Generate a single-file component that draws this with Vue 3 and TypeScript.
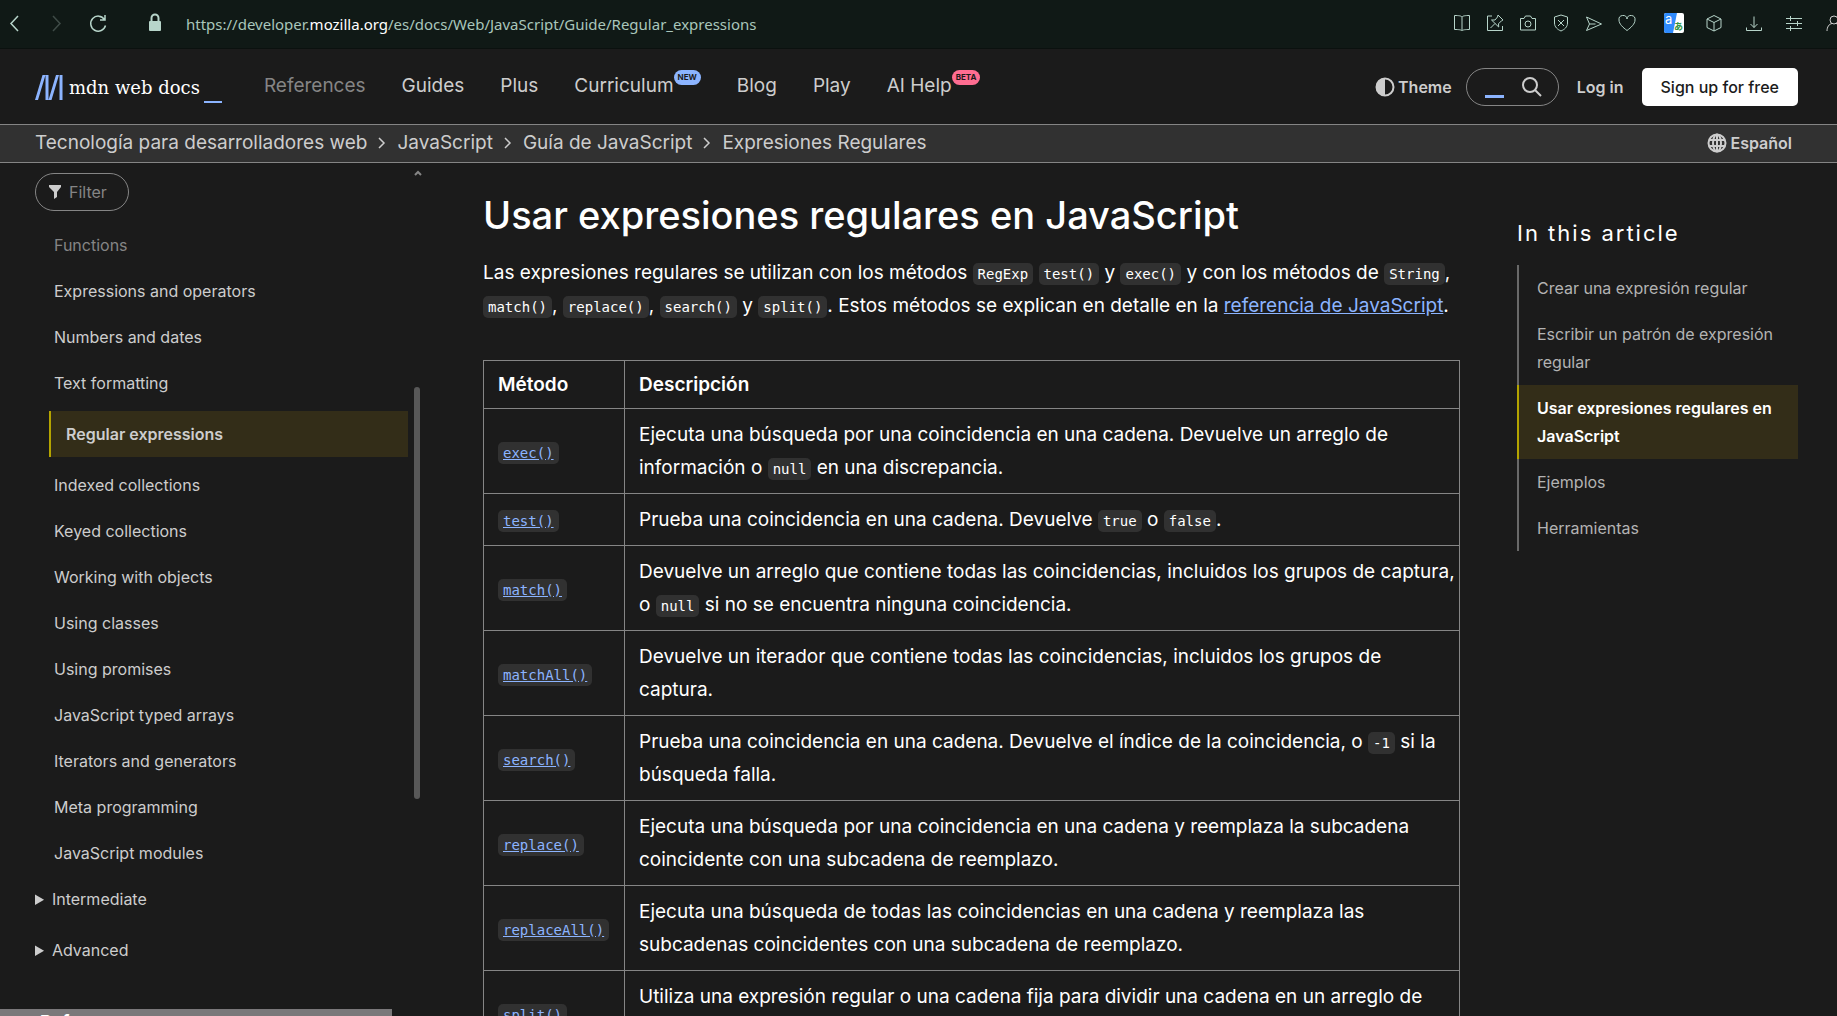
<script setup lang="ts">
interface NavItem { label: string; badge?: string; tone?: string; dim?: boolean }
interface Part { kind: 'text' | 'code' | 'link'; value: string }
interface Method { name: string; text: Part[] }

const t = (value: string): Part => ({ kind: 'text', value })
const c = (value: string): Part => ({ kind: 'code', value })
const l = (value: string): Part => ({ kind: 'link', value })

const nav: NavItem[] = [
  { label: 'References', dim: true },
  { label: 'Guides' },
  { label: 'Plus' },
  { label: 'Curriculum', badge: 'NEW', tone: 'new' },
  { label: 'Blog' },
  { label: 'Play' },
  { label: 'AI Help', badge: 'BETA', tone: 'beta' },
]

const crumbs = ['Tecnología para desarrolladores web', 'JavaScript', 'Guía de JavaScript', 'Expresiones Regulares']

const sidebar = [
  'Functions', 'Expressions and operators', 'Numbers and dates', 'Text formatting', 'Regular expressions',
  'Indexed collections', 'Keyed collections', 'Working with objects', 'Using classes', 'Using promises',
  'JavaScript typed arrays', 'Iterators and generators', 'Meta programming', 'JavaScript modules',
]

const intro: Part[] = [
  t('Las expresiones regulares se utilizan con los métodos '), c('RegExp'), t(' '), c('test()'), t(' y '), c('exec()'),
  t(' y con los métodos de '), c('String'), t(', '), c('match()'), t(', '), c('replace()'), t(', '), c('search()'),
  t(' y '), c('split()'), t('. Estos métodos se explican en detalle en la '), l('referencia de JavaScript'), t('.'),
]

const methods: Method[] = [
  { name: 'exec()', text: [t('Ejecuta una búsqueda por una coincidencia en una cadena. Devuelve un arreglo de información o '), c('null'), t(' en una discrepancia.')] },
  { name: 'test()', text: [t('Prueba una coincidencia en una cadena. Devuelve '), c('true'), t(' o '), c('false'), t('.')] },
  { name: 'match()', text: [t('Devuelve un arreglo que contiene todas las coincidencias, incluidos los grupos de captura, o '), c('null'), t(' si no se encuentra ninguna coincidencia.')] },
  { name: 'matchAll()', text: [t('Devuelve un iterador que contiene todas las coincidencias, incluidos los grupos de captura.')] },
  { name: 'search()', text: [t('Prueba una coincidencia en una cadena. Devuelve el índice de la coincidencia, o '), c('-1'), t(' si la búsqueda falla.')] },
  { name: 'replace()', text: [t('Ejecuta una búsqueda por una coincidencia en una cadena y reemplaza la subcadena coincidente con una subcadena de reemplazo.')] },
  { name: 'replaceAll()', text: [t('Ejecuta una búsqueda de todas las coincidencias en una cadena y reemplaza las subcadenas coincidentes con una subcadena de reemplazo.')] },
  { name: 'split()', text: [t('Utiliza una expresión regular o una cadena fija para dividir una cadena en un arreglo de subcadenas.')] },
]

const toc = ['Crear una expresión regular', 'Escribir un patrón de expresión regular', 'Usar expresiones regulares en JavaScript', 'Ejemplos', 'Herramientas']
</script>

<template>
  <div class="window">
    <div class="browser">
      <button class="tool" aria-label="Back"><svg width="16" height="20" viewBox="0 0 16 20"><path d="M10 3L3 10.500l7 7.500" /></svg></button>
      <button class="tool forward" aria-label="Forward"><svg width="16" height="20" viewBox="0 0 16 20"><path d="M5 3l7 7.500L5 18" /></svg></button>
      <button class="tool reload" aria-label="Reload"><svg width="20" height="20" viewBox="0 0 20 20"><path d="M16.500 6.500A7.500 7.500 0 1 0 17.500 12.500M17 2v5h-5" /></svg></button>
      <svg class="lock" width="14" height="20" viewBox="0 0 14 20"><path d="M3.500 9V5a3.500 3.500 0 0 1 7 0v4" /><rect x="1" y="8" width="12" height="10" rx="1" /></svg>
      <span class="url">https://developer.<b>mozilla.org</b>/es/docs/Web/JavaScript/Guide/Regular_expressions</span>
      <div class="actions">
        <button class="tool" aria-label="Reader"><svg width="20" height="20" viewBox="0 0 20 20"><path d="M10 4C9 2.800 7 2.500 2.500 2.500v14c4.500 0 6.500.3 7.500 1.200M10 4c1-1.200 3-1.500 7.500-1.500v14c-4.500 0-6.500.3-7.500 1.200M10 4v13.500" /></svg></button>
        <button class="tool" aria-label="Pinboard"><svg width="20" height="20" viewBox="0 0 20 20"><path d="M7 3H2.500v14.500h15V13M13 2l5 5-1.500.8-3 3 .2 3.200-7.200-7 3.500 0 2.500-3zM10 10.500L5.500 15" /></svg></button>
        <button class="tool" aria-label="Snapshot"><svg width="20" height="20" viewBox="0 0 20 20"><path d="M2.500 5.500h3.500L7.500 3h5L14 5.500h3.500v11.500h-15z" /><circle cx="10" cy="11" r="3" /></svg></button>
        <button class="tool" aria-label="Ad blocker"><svg width="20" height="20" viewBox="0 0 20 20"><path d="M10 2l6.500 2v6c0 4-3 6.500-6.500 8-3.500-1.500-6.500-4-6.500-8V4zM7 7l6 6M13 7l-6 6" /></svg></button>
        <button class="tool" aria-label="Send"><svg width="20" height="20" viewBox="0 0 20 20"><path d="M2.500 4l15 7-15 6.500 3-6.500zM5.500 11h6" /></svg></button>
        <button class="tool heart" aria-label="Favourite"><svg width="20" height="20" viewBox="0 0 20 20"><path d="M10 17.500C6 14.500 2 11 2 7a4 4 0 0 1 8-1 4 4 0 0 1 8 1c0 4-4 7.500-8 10.500z" /></svg></button>
        <button class="tool wide" aria-label="Translate">
          <svg class="translate" width="20" height="20" viewBox="0 0 20 20"><rect width="20" height="20" rx="2" fill="#fff" /><path d="M2 0h11L9 20H2a2 2 0 0 1-2-2V2a2 2 0 0 1 2-2z" fill="#2f8bfd" /><text x="1" y="11" font-size="13" fill="#fff">a</text><text x="10" y="17" font-size="9" font-weight="700" fill="#2f9440">あ</text></svg>
        </button>
        <button class="tool wide" aria-label="Extensions"><svg width="20" height="20" viewBox="0 0 20 20"><path d="M10 2.500l7 3.500v8.500l-7 3.500-7-3.500V6zM3 6l7 3.500L17 6M10 9.500V18" /></svg></button>
        <button class="tool wide" aria-label="Downloads"><svg width="20" height="20" viewBox="0 0 20 20"><path d="M10 3.500v11M6.500 11l3.500 3.500 3.500-3.500M2.500 14.500v3h15v-3" /></svg></button>
        <button class="tool wide" aria-label="Easy setup"><svg width="20" height="20" viewBox="0 0 20 20"><path d="M2 5.500h16M2 10.500h16M2 15.500h16M6.500 3v5M13.500 8v5M6.500 13v5" /></svg></button>
        <button class="tool account" aria-label="Account"><svg width="20" height="20" viewBox="0 0 20 20"><circle cx="10" cy="7" r="4" /><path d="M3 18c0-4 2-7 5-7.500M17 18c0-4-2-7-5-7.500" /></svg></button>
      </div>
    </div>

    <header class="top">
      <a class="logo" href="#" aria-label="mdn web docs">
        <svg width="28" height="26" viewBox="0 0 28 26"><path d="M7.500 0h3L3 25H0zM10.500 0h3v25h-3zM21 0h3l-7.500 25h-3zM24.500 0h3v25h-3z" /></svg>
        <span class="logo-name">mdn web docs</span><span class="logo-line"></span>
      </a>
      <nav class="menu">
        <a v-for="n in nav" :key="n.label" href="#" :class="{ dim: n.dim }">{{ n.label }}<sup v-if="n.badge" :class="n.tone">{{ n.badge }}</sup></a>
      </nav>
      <div class="tools">
        <button class="theme"><svg width="20" height="20" viewBox="0 0 20 20"><circle cx="10" cy="10" r="8.500" fill="none" stroke="currentColor" stroke-width="2" /><path d="M10 1a9 9 0 0 0 0 18z" fill="currentColor" /></svg>Theme</button>
        <button class="search" aria-label="Search"><span class="cursor"></span><svg width="20" height="20" viewBox="0 0 20 20"><circle cx="8" cy="8" r="7" /><path d="M13 13l6 6" /></svg></button>
        <a class="login" href="#">Log in</a>
        <a class="signup" href="#">Sign up for free</a>
      </div>
    </header>

    <div class="crumb-bar">
      <nav class="crumbs">
        <template v-for="(item, i) in crumbs" :key="item">
          <svg v-if="i > 0" width="8" height="12" viewBox="0 0 8 12"><path d="M1 1l5 5-5 5" /></svg>
          <a href="#">{{ item }}</a>
        </template>
      </nav>
      <button class="language"><svg width="20" height="20" viewBox="0 0 20 20"><circle cx="10" cy="10" r="8.500" /><ellipse cx="10" cy="10" rx="4" ry="8.500" /><path d="M10 1.500v17M2.500 7h15M2.500 13h15" /></svg>Español</button>
    </div>

    <div class="columns">
      <aside class="side">
        <div class="side-body">
          <label class="filter">
            <svg width="14" height="14" viewBox="0 0 14 14"><path d="M1 0h12v2L9 7v5l-3 2V7L1 2z" /></svg>
            <input type="text" placeholder="Filter" aria-label="Filter">
          </label>
          <ul class="links">
            <li v-for="(item, i) in sidebar" :key="item" :class="{ faded: i === 0, current: i === 4 }"><a href="#">{{ item }}</a></li>
          </ul>
          <details><summary>Intermediate</summary></details>
          <details><summary>Advanced</summary></details>
        </div>
        <div class="scroll">
          <svg width="8" height="6" viewBox="0 0 8 6"><path d="M1 5l3-3 3 3" /></svg>
          <div class="thumb"></div>
        </div>
      </aside>

      <main class="article">
        <h1>Usar expresiones regulares en JavaScript</h1>
        <p class="intro"><template v-for="(p, i) in intro" :key="i"><code v-if="p.kind === 'code'">{{ p.value }}</code><a v-else-if="p.kind === 'link'" href="#">{{ p.value }}</a><template v-else>{{ p.value }}</template></template></p>
        <table>
          <thead><tr><th scope="col">Método</th><th scope="col">Descripción</th></tr></thead>
          <tbody>
            <tr v-for="m in methods" :key="m.name">
              <td><a href="#"><code>{{ m.name }}</code></a></td>
              <td><template v-for="(p, i) in m.text" :key="i"><code v-if="p.kind === 'code'">{{ p.value }}</code><template v-else>{{ p.value }}</template></template></td>
            </tr>
          </tbody>
        </table>
      </main>

      <aside class="toc">
        <h2>In this article</h2>
        <ul>
          <li v-for="(item, i) in toc" :key="item" :class="{ current: i === 2 }"><a href="#">{{ item }}</a></li>
        </ul>
      </aside>
    </div>
    <div class="status">References</div>
  </div>
</template>

<style>
html, body { margin: 0; background: #1b1b1b; }
</style>

<style scoped>
* { box-sizing: border-box; }
.window { position: relative; display: flex; flex-direction: column; height: 100vh; overflow: hidden; background: #1b1b1b; color: #fff; font-family: Inter, sans-serif; font-size: 19px; }
a { color: inherit; text-decoration: none; }
button { font: inherit; color: inherit; background: none; border: 0; padding: 0; cursor: pointer; }
ul { list-style: none; margin: 0; padding: 0; }
svg { flex: none; display: block; }

.browser { flex: none; display: flex; align-items: center; height: 49px; padding: 0 0 2px 8px; background: #101916; border-bottom: 1px solid #0b110f; color: #b7d5ca; overflow: hidden; }
.tool { flex: none; }
.tool svg { fill: none; stroke: currentColor; stroke-width: 1; }
.browser > .tool svg { stroke-width: 1.5; }
.browser > .tool { margin-right: 24px; }
.browser > .forward { color: #3f4b47; }
.browser > .reload { margin-right: 40px; }
.lock { fill: #b7d5ca; stroke: none; }
.lock path { fill: none; stroke: #b7d5ca; stroke-width: 2; }
.url { margin-left: 24px; padding-top: 2px; font: 15px/20px "Noto Sans", sans-serif; white-space: nowrap; color: #a9c6bb; }
.url b { font-weight: 400; color: #fff; }
.actions { display: flex; gap: 13px; margin-left: auto; margin-right: -7px; }
.actions .wide { margin-left: 7px; }
.actions .heart { margin-right: 7px; }
.actions .account { margin-left: 7px; color: #cdcdcd; }
.actions .translate { stroke: none; font-family: Inter, "Noto Sans CJK JP", sans-serif; }

.top { flex: none; display: flex; align-items: center; height: 75px; padding: 0 39px 0 35px; color: #cdcdcd; }
.logo { display: flex; align-items: center; padding-top: 2px; color: #fff; }
.logo svg { fill: #8cb4ff; }
.logo-name { margin-left: 6px; font: 18px/30px "DejaVu Serif", serif; white-space: nowrap; }
.logo-line { align-self: flex-end; width: 18px; height: 2px; margin-left: 4px; background: #8cb4ff; }
.menu { display: flex; gap: 36px; margin-left: 42px; padding-bottom: 2px; }
.menu a { display: flex; line-height: 28px; white-space: nowrap; }
.menu .dim { color: #858585; }
sup { height: 15px; margin-top: -2px; padding: 0 4px; border-radius: 8px; font-size: 8px; line-height: 15px; font-weight: 700; color: #1b1b1b; }
.new { background: #8cb4ff; }
.beta { background: #ff6d91; }
.tools { display: flex; align-items: center; margin-left: auto; font-size: 16px; font-weight: 500; white-space: nowrap; }
.theme, .language { display: flex; align-items: center; gap: 3px; }
.theme, .login { font-weight: 600; }
.search { display: flex; align-items: center; justify-content: space-between; width: 93px; height: 38px; margin: 0 18px 0 14px; padding: 0 16px 0 18px; border: 1px solid #858585; border-radius: 19px; }
.search svg { fill: none; stroke: currentColor; stroke-width: 2; }
.cursor { width: 19px; height: 3px; margin-top: 20px; background: #8cb4ff; }
.signup { margin-left: 18px; padding: 0 19px; border-radius: 5px; background: #fff; color: #1b1b1b; line-height: 38px; }

.crumb-bar { flex: none; display: flex; align-items: center; justify-content: space-between; height: 39px; padding: 0 45px 2px 35px; border: solid #858585; border-width: 1px 0; background: #313131; color: #cdcdcd; }
.crumbs { display: flex; align-items: center; gap: 11px; }
.crumbs svg { fill: none; stroke: currentColor; stroke-width: 1.5; }
.language { font-size: 16px; font-weight: 600; }
.language svg { fill: none; stroke: currentColor; stroke-width: 2; }

.columns { flex: 1; min-height: 0; display: flex; padding: 0 39px 0 35px; }
.side { flex: none; display: flex; gap: 6px; width: 386px; font-size: 16px; color: #cdcdcd; }
.side-body { flex: 1; padding-top: 10px; }
.filter { display: flex; align-items: center; gap: 7px; width: 94px; height: 38px; padding: 0 12px; border: 1px solid #858585; border-radius: 19px; }
.filter svg { fill: #cdcdcd; }
.filter input { width: 46px; padding: 0; border: 0; outline: 0; background: none; font: inherit; color: inherit; }
.filter input::placeholder { color: #858585; opacity: 1; }
.links { padding: 11px 0 0 14px; }
.links li { height: 46px; padding-left: 5px; line-height: 46px; }
.links .faded { color: #858585; }
.links .current { margin: 5px 0; padding-left: 15px; border-left: 2px solid #b4a400; background: #332d18; font-weight: 600; }
summary { height: 46px; line-height: 46px; }
details + details { margin-top: 5px; }
.scroll { width: 7px; padding-top: 7px; }
.scroll svg { fill: none; stroke: #858585; stroke-width: 2; }
.thumb { width: 6px; height: 412px; margin-top: 211px; border-radius: 3px; background: #585858; }

.article { flex: 1; min-width: 0; margin: 0 57px 0 62px; line-height: 33px; }
h1 { margin: 28px 0 0; font-size: 38px; line-height: 48px; font-weight: 500; }
.intro { margin: 17px 0 38px; }
.article a { color: #8cb4ff; text-decoration: underline; }
code { padding: 3px 5px; border-radius: 5px; background: #313131; font-family: "DejaVu Sans Mono", monospace; font-size: 14px; line-height: 16px; }
table { width: 100%; border-collapse: collapse; }
th, td { padding: 9px 2px 9px 14px; border: 1px solid #858585; text-align: left; }
th { line-height: 29px; font-weight: 600; }
th:first-child { width: 141px; }

.toc { flex: none; width: 281px; font-size: 16px; line-height: 28px; color: #b3b3b3; }
h2 { margin: 56px 0 18px; font-size: 22px; line-height: 28px; font-weight: 400; letter-spacing: 2px; color: #fff; }
.toc li { padding: 9px 18px; border-left: 2px solid #696969; }
.toc .current { border-color: #b4a400; background: #332d18; color: #fff; font-weight: 600; }

.status { position: absolute; left: 0; bottom: 0; width: 392px; height: 7px; padding-left: 40px; overflow: hidden; background: #7a787a; font-size: 18px; font-weight: 700; line-height: 26px; }
</style>
